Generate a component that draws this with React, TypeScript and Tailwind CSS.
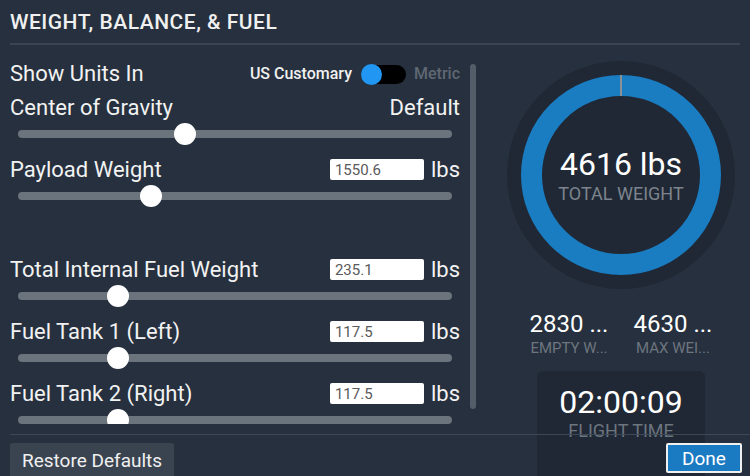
import React from "react";

/**
 * Weight, balance & fuel panel
 * - left: scrollable list of sliders
 * - right: total weight gauge, stats, flight time
 */

type Row = {
  label: string;
  value?: string;
  right?: string;
  thumb: number; // thumb centre x, page px
};

const rows: Row[] = [
  { label: "Center of Gravity", right: "Default", thumb: 185 },
  { label: "Payload Weight", value: "1550.6", thumb: 151 },
  { label: "Total Internal Fuel Weight", value: "235.1", thumb: 118 },
  { label: "Fuel Tank 1 (Left)", value: "117.5", thumb: 118 },
  { label: "Fuel Tank 2 (Right)", value: "117.5", thumb: 118 },
];

function Slider({ thumb }: { thumb: number }) {
  return (
    <div className="relative flex h-[28px] items-center">
      <div className="mx-[8px] h-[8px] flex-1 rounded-full bg-[#6b737d]" />
      <div
        className="absolute top-[3px] h-[22px] w-[22px] rounded-full bg-white"
        style={{ left: thumb - 11 - 10 }}
      />
    </div>
  );
}

function SliderRow({ row, extraTop }: { row: Row; extraTop?: boolean }) {
  return (
    <div className={extraTop ? "mt-[46px]" : "mt-[8px]"}>
      <div className="flex h-[26px] items-center justify-between text-[22px] text-[#f2f2f2]">
        <span>{row.label}</span>
        {row.right ? (
          <span>{row.right}</span>
        ) : (
          <div className="flex items-center">
            <div className="flex h-[21px] w-[94px] items-center rounded-[2px] bg-white pl-[5px] pt-[3px] text-[15px] text-[#5a5a5a]">
              {row.value}
            </div>
            <span className="ml-[7px]">lbs</span>
          </div>
        )}
      </div>
      <Slider thumb={row.thumb} />
    </div>
  );
}

function Gauge() {
  return (
    <div className="relative h-[228px] w-[228px] shrink-0">
      <svg width="228" height="228" viewBox="0 0 228 228" className="absolute inset-0">
        <circle cx="114" cy="114" r="114" fill="#1f2834" />
        <circle cx="114" cy="114" r="89.5" fill="none" stroke="#1a7cc1" strokeWidth="21" />
        <rect x="113" y="14" width="2" height="21" fill="#8b9096" />
      </svg>
      <div className="absolute inset-0 flex flex-col items-center justify-center">
        <div className="text-[32px] leading-[34px] text-white">4616 lbs</div>
        <div className="mt-[3px] text-[18px] leading-[20px] text-[#7d848d]">TOTAL WEIGHT</div>
      </div>
    </div>
  );
}

export default function App() {
  return (
    <div
      className="relative flex h-[476px] w-[750px] flex-col overflow-hidden bg-[#26303e] text-white"
      style={{ fontFamily: "Roboto, 'Liberation Sans', sans-serif" }}
    >
      {/* header */}
      <div className="flex h-[43px] shrink-0 items-center pl-[10px] pt-[2px]">
        <h1 className="text-[21px] font-medium tracking-[0.5px] text-[#f0f0f0]">
          WEIGHT, BALANCE, &amp; FUEL
        </h1>
      </div>
      <div className="mx-[10px] h-[2px] shrink-0 bg-[#3a4553]" />

      {/* body */}
      <div className="flex h-[388px] shrink-0">
        <div className="flex h-[379px] overflow-hidden pl-[10px]">
          <div className="w-[450px] pt-[15px]">
            <div className="flex h-[26px] items-center justify-between">
              <span className="text-[22px] text-[#f2f2f2]">Show Units In</span>
              <div className="flex items-center pt-[2px]">
                <span className="text-[16px] font-medium text-[#f0f0f0]">US Customary</span>
                <div className="relative ml-[10px] h-[19px] w-[44px] rounded-full bg-black">
                  <div className="absolute left-[-1px] top-[-1px] h-[21px] w-[21px] rounded-full bg-[#2196f3]" />
                </div>
                <span className="ml-[8px] text-[16px] font-medium text-[#5f6873]">Metric</span>
              </div>
            </div>
            <SliderRow row={rows[0]} extraTop={false} />
            <SliderRow row={rows[1]} />
            <SliderRow row={rows[2]} extraTop />
            <SliderRow row={rows[3]} />
            <SliderRow row={rows[4]} />
          </div>
          {/* scrollbar */}
          <div className="ml-[10px] mt-[19px] h-[345px] w-[6px] rounded-full bg-[#535c69]" />
        </div>

        {/* right column */}
        <div className="ml-[31px] mt-[16px] flex w-[228px] flex-col items-center">
          <Gauge />
          <div className="mt-[21px] flex shrink-0 gap-[14px]">
            <div className="flex w-[90px] flex-col items-center">
              <span className="text-[24px] leading-[28px] text-white">2830 ...</span>
              <span className="mt-[2px] text-[15px] leading-[16px] text-[#6d757f]">EMPTY W...</span>
            </div>
            <div className="flex w-[90px] flex-col items-center">
              <span className="text-[24px] leading-[28px] text-white">4630 ...</span>
              <span className="mt-[2px] text-[15px] leading-[16px] text-[#6d757f]">MAX WEI...</span>
            </div>
          </div>
          <div className="mt-[15px] flex h-[120px] w-[168px] shrink-0 flex-col items-center rounded-[6px] bg-[#1f2834] pt-[14px]">
            <span className="text-[32px] leading-[34px] text-white">02:00:09</span>
            <span className="mt-[2px] text-[18px] leading-[20px] text-[#6d757f]">FLIGHT TIME</span>
          </div>
        </div>
      </div>

      {/* footer */}
      <div className="absolute bottom-0 left-[10px] right-0 top-[434px] z-10 flex items-start justify-between border-t border-[#3d4856] pt-[8px]">
        <button className="h-[36px] w-[164px] rounded-[3px] bg-[#3a4451] pl-[12px] text-left text-[19px] text-[#f0f0f0]">
          Restore Defaults
        </button>
        <button className="mr-[8px] h-[30px] w-[76px] rounded-[2px] border-2 border-[#f0f0f0] bg-[#1b7bc2] text-[19px] text-white">
          Done
        </button>
      </div>
    </div>
  );
}
